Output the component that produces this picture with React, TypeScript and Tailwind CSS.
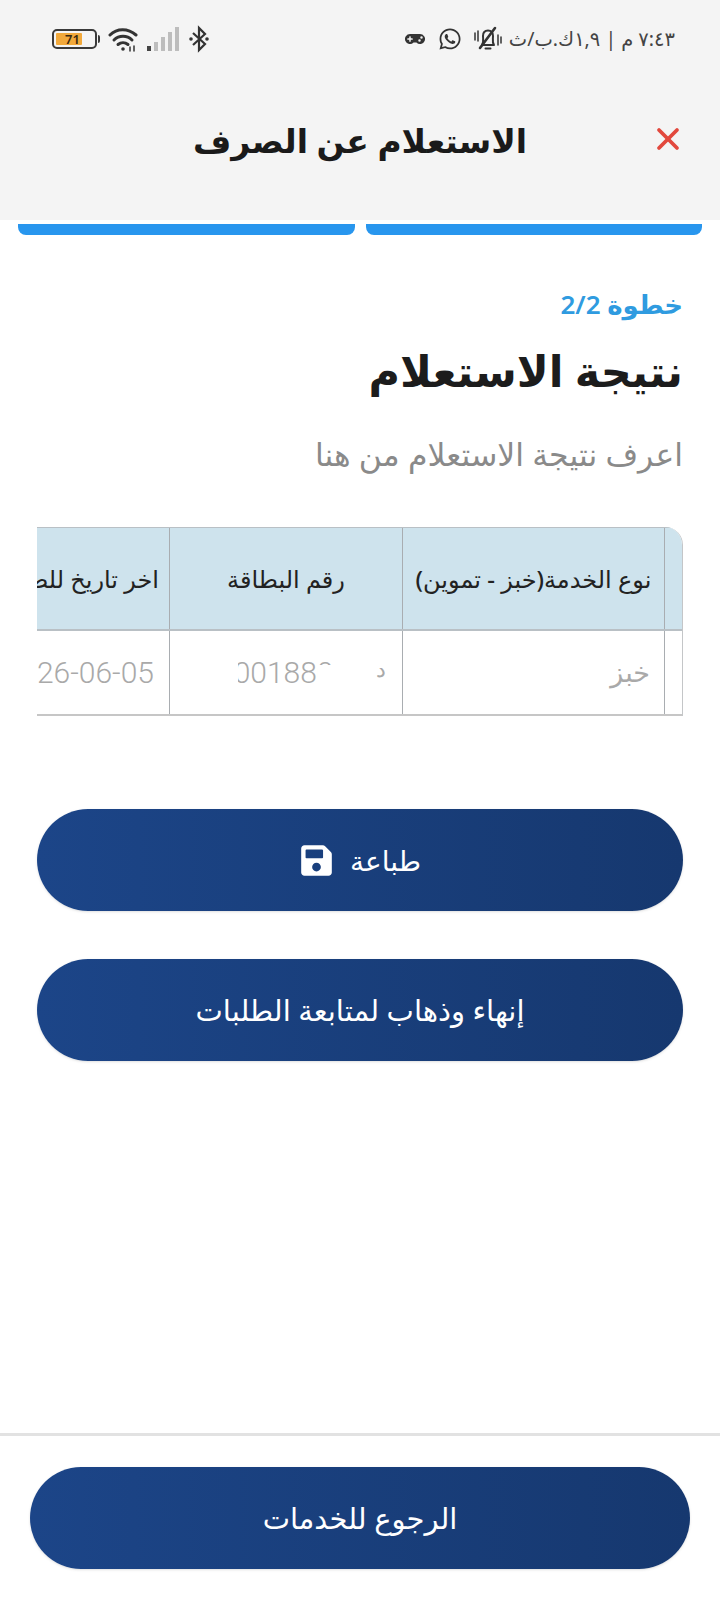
import { X } from "lucide-react";
import { FaGamepad, FaSave, FaWhatsapp } from "react-icons/fa";

const fontStack = { fontFamily: '"Noto Sans", "DejaVu Sans", sans-serif' };
const btnBg = "bg-gradient-to-l from-[#16386f] to-[#1c4588]";

function StatusBar() {
  return (
    <div dir="ltr" className="flex items-center justify-between pl-[52px] pr-[45px] py-[16px] h-[78px]">
      <div className="flex items-center">
        {/* battery */}
        <div className="flex items-center">
          <div className="relative w-[45px] h-[20px] rounded-[5px] border-2 border-[#3a3a3a] p-[2px]">
            <div className="h-full w-[71%] rounded-[1px] bg-[#f2a93b]" />
            <span className="absolute inset-0 flex items-center justify-center pr-[4px] text-[13px] font-semibold leading-none text-[#3a2a10]">71</span>
          </div>
          <div className="ml-[1px] h-[8px] w-[2px] rounded-r bg-[#3a3a3a]" />
        </div>
        {/* wifi */}
        <svg className="ml-[8px]" width="30" height="26" viewBox="0 0 30 26" fill="none" stroke="#333" strokeWidth="3" strokeLinecap="round">
          <path d="M2 9 C9 2 20 2 28 9" />
          <path d="M6 14 C11 9 19 9 24 14" />
          <path d="M10 18.500 C13 16 17 16 20 18.500" />
          <circle cx="15" cy="23" r="1.800" fill="#333" stroke="none" />
          <path d="M22 21v4M26 20v5" strokeWidth="1.500" />
        </svg>
        {/* signal */}
        <svg className="ml-[9px]" width="32" height="26" viewBox="0 0 32 26">
          <rect x="0" y="20" width="4" height="5" fill="#444" />
          <rect x="7" y="16" width="4" height="9" fill="#bdbdbd" />
          <rect x="14" y="11" width="4" height="14" fill="#bdbdbd" />
          <rect x="21" y="6" width="4" height="19" fill="#bdbdbd" />
          <rect x="28" y="1" width="4" height="24" fill="#bdbdbd" />
        </svg>
        {/* bluetooth */}
        <svg className="ml-[9px]" width="22" height="28" viewBox="0 0 22 28" fill="none" stroke="#333" strokeWidth="2.200">
          <path d="M5 8 L17 19 L11 25 V3 L17 9 L5 20" />
          <circle cx="3" cy="14" r="1.800" fill="#333" stroke="none" />
          <circle cx="19" cy="14" r="1.800" fill="#333" stroke="none" />
        </svg>
      </div>
      <div className="flex items-center">
        <FaGamepad className="text-[#333] text-[20px]" />
        <FaWhatsapp className="ml-[13px] text-[#333] text-[24px]" />
        {/* muted bell with vibrate marks */}
        <svg className="ml-[12px]" width="28" height="26" viewBox="0 0 28 26" fill="none" stroke="#333" strokeWidth="2" strokeLinecap="round" strokeLinejoin="round">
          <path d="M8 19 C10 16 9 13 9 10 C9 6.500 11 4.500 14 4.500 C17 4.500 19 6.500 19 10 C19 13 18 16 20 19 Z" />
          <path d="M11.500 22.500 H16.500" />
          <path d="M6 22 L21 2" strokeWidth="2.600" />
          <path d="M1 7v7M4 5v10M24 9v10M27 11v6" strokeWidth="1.500" />
        </svg>
        <span dir="rtl" className="ml-[7px] text-[19.500px] leading-none text-[#444] whitespace-nowrap">٧:٤٣ م | ١,٩ك.ب/ث</span>
      </div>
    </div>
  );
}

function Header() {
  return (
    <div className="bg-[#f4f4f4] h-[220px]">
      <StatusBar />
      <div className="relative flex items-center justify-center h-[62px] mt-[31px]">
        <h1 className="text-[33px] font-semibold text-[#1a1a1a] leading-none">الاستعلام عن الصرف</h1>
        <X className="absolute right-[34px] top-[12px] text-[#e2483d]" size={36} strokeWidth={2.5} />
      </div>
    </div>
  );
}

function Steps() {
  return (
    <div className="flex gap-[11px] px-[18px] pt-[4px] h-[15px]">
      <div className="flex-1 rounded-b-[8px] bg-[#2896ee]" />
      <div className="flex-1 rounded-b-[8px] bg-[#2896ee]" />
    </div>
  );
}

function ResultTable() {
  const cell = "flex items-center justify-center border-l border-[#a9adb1]";
  return (
    <div className="mx-[37px] mt-[57px] overflow-hidden rounded-tr-[18px] border-r border-[#c4c6c8]">
      <div className="grid grid-cols-[18px_262px_233px_220px] h-[104px] bg-[#cee3ed] border-b-2 border-t border-[#b9c0c5] text-[24px] font-medium text-[#222]">
        <div className={cell} />
        <div className={`${cell} whitespace-nowrap`}>نوع الخدمة(خبز - تموين)</div>
        <div className={cell}>رقم البطاقة</div>
        <div className="flex items-center justify-start pr-[10px] whitespace-nowrap">اخر تاريخ للصرف</div>
      </div>
      <div className="grid grid-cols-[18px_262px_233px_220px] h-[85px] border-b-2 border-[#c6c6c6] text-[#a9a9a9]">
        <div className={cell} />
        <div className={`${cell} justify-start pr-[14px] text-[27px]`}>خبز</div>
        {/* card number is partly blurred out in the source */}
        <div dir="ltr" className="relative flex items-center pl-[47px] border-l border-[#a9adb1] text-[30px] font-light" style={{ fontFamily: "Roboto, sans-serif" }}>
          000188000
          <span className="absolute left-0 inset-y-0 w-[68px] bg-white" />
          <span className="absolute left-[148px] top-[34px] bottom-0 w-[56px] bg-white" />
          <span className="absolute left-[165px] inset-y-0 w-[40px] bg-white" />
          <span className="absolute right-[16px] top-[26px] text-[22px] leading-none" style={fontStack}>د</span>
        </div>
        <div className="flex items-center justify-start pr-[15px] text-[30px] font-light whitespace-nowrap" style={{ fontFamily: "Roboto, sans-serif" }}>
          <span dir="ltr">2026-06-05</span>
        </div>
      </div>
    </div>
  );
}

export default function App() {
  return (
    <div dir="rtl" className="relative flex flex-col h-[1600px] w-[720px] bg-white overflow-hidden" style={fontStack}>
      <Header />
      <Steps />
      <div className="px-[37px] pt-[56px]">
        <p className="text-[26px] font-semibold leading-none text-[#2f9be0]">خطوة 2/2</p>
        <h2 className="mt-[32px] text-[43px] font-semibold leading-none text-[#1c1c1c]">نتيجة الاستعلام</h2>
        <p className="mt-[46px] h-[32px] text-[31.500px] leading-none text-[#8a8a8a]">اعرف نتيجة الاستعلام من هنا</p>
      </div>
      <ResultTable />
      <div className="flex flex-col gap-[48px] mx-[37px] mt-[93px]">
        <button className={`flex items-center justify-center gap-[16px] h-[102px] rounded-full ${btnBg} text-[28px] text-white shadow-sm`}>
          طباعة
          <FaSave className="text-[35px]" />
        </button>
        <button className={`flex items-center justify-center h-[102px] rounded-full ${btnBg} text-[29px] text-white shadow-sm`}>
          إنهاء وذهاب لمتابعة الطلبات
        </button>
      </div>
      <div className="mt-auto border-t-[3px] border-[#e2e2e2] px-[30px] pt-[31px] pb-[31px]">
        <button className={`flex items-center justify-center w-full h-[102px] rounded-full ${btnBg} text-[29px] text-white shadow-sm`}>
          الرجوع للخدمات
        </button>
      </div>
    </div>
  );
}
